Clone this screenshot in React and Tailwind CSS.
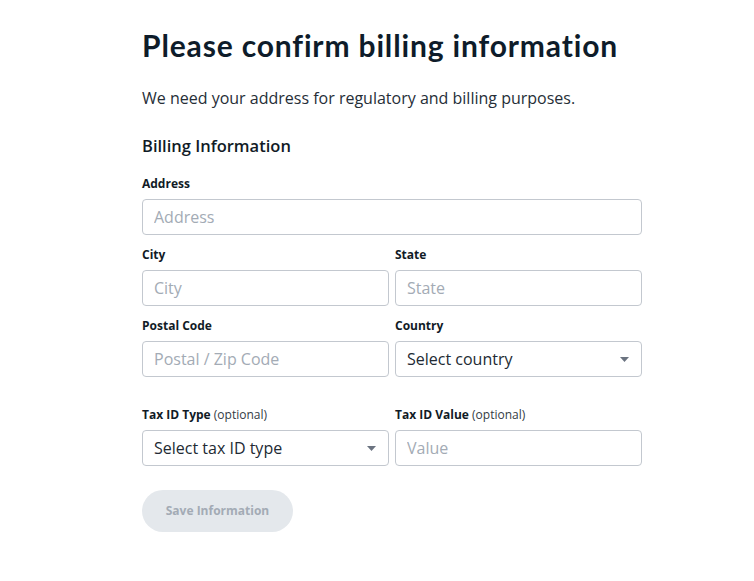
import { useState } from "react";

const Label = ({ children, optional }) => (
  <label className="block text-[12px] font-bold leading-[16px] text-[#111b26] mb-[7px]">
    {children}
    {optional && <span className="font-normal text-[#333b44]"> (optional)</span>}
  </label>
);

const Input = ({ placeholder }) => (
  <input
    placeholder={placeholder}
    className="w-full h-[36px] px-[11px] text-[16px] text-[#222] placeholder:text-[#a3abb5] border border-[#c3c8cf] rounded-[4px] bg-white outline-none"
  />
);

const Select = ({ text }) => (
  <div className="relative w-full h-[36px] flex items-center px-[11px] text-[16px] text-[#222a33] border border-[#c3c8cf] rounded-[4px] bg-white">
    <span>{text}</span>
    <svg className="absolute right-[12px] top-[15px]" width="9" height="5" viewBox="0 0 9 5">
      <path d="M0 0h9L4.5 5z" fill="#6b7380" />
    </svg>
  </div>
);

const App = () => {
  const [saving] = useState(false);
  return (
    <div className="min-h-[581px] bg-white font-['Open_Sans',sans-serif]">
      <div className="w-[500px] ml-[142px] pt-[27px]">
        <h1 className="text-[30px] leading-[36px] font-bold text-[#0e1c2a] font-['Lato',sans-serif] tracking-[0.85px]">
          Please confirm billing information
        </h1>
        <p className="mt-[24px] text-[16px] leading-[22px] text-[#262e37]">
          We need your address for regulatory and billing purposes.
        </p>
        <h2 className="mt-[26px] text-[16.5px] leading-[22px] font-semibold text-[#111b26]">Billing Information</h2>

        <div className="mt-[19px]">
          <Label>Address</Label>
          <Input placeholder="Address" />
        </div>

        <div className="grid grid-cols-2 gap-x-[6px] mt-[12px]">
          <div>
            <Label>City</Label>
            <Input placeholder="City" />
          </div>
          <div>
            <Label>State</Label>
            <Input placeholder="State" />
          </div>
        </div>

        <div className="grid grid-cols-2 gap-x-[6px] mt-[12px]">
          <div>
            <Label>Postal Code</Label>
            <Input placeholder="Postal / Zip Code" />
          </div>
          <div>
            <Label>Country</Label>
            <Select text="Select country" />
          </div>
        </div>

        <div className="grid grid-cols-2 gap-x-[6px] mt-[30px]">
          <div>
            <Label optional>Tax ID Type</Label>
            <Select text="Select tax ID type" />
          </div>
          <div>
            <Label optional>Tax ID Value</Label>
            <Input placeholder="Value" />
          </div>
        </div>

        <button
          disabled={!saving}
          className="mt-[24px] w-[151px] h-[42px] rounded-full bg-[#e4e8ec] text-[12px] font-bold text-[#a3abb5]"
        >
          Save Information
        </button>
      </div>
    </div>
  );
};

export default App;
